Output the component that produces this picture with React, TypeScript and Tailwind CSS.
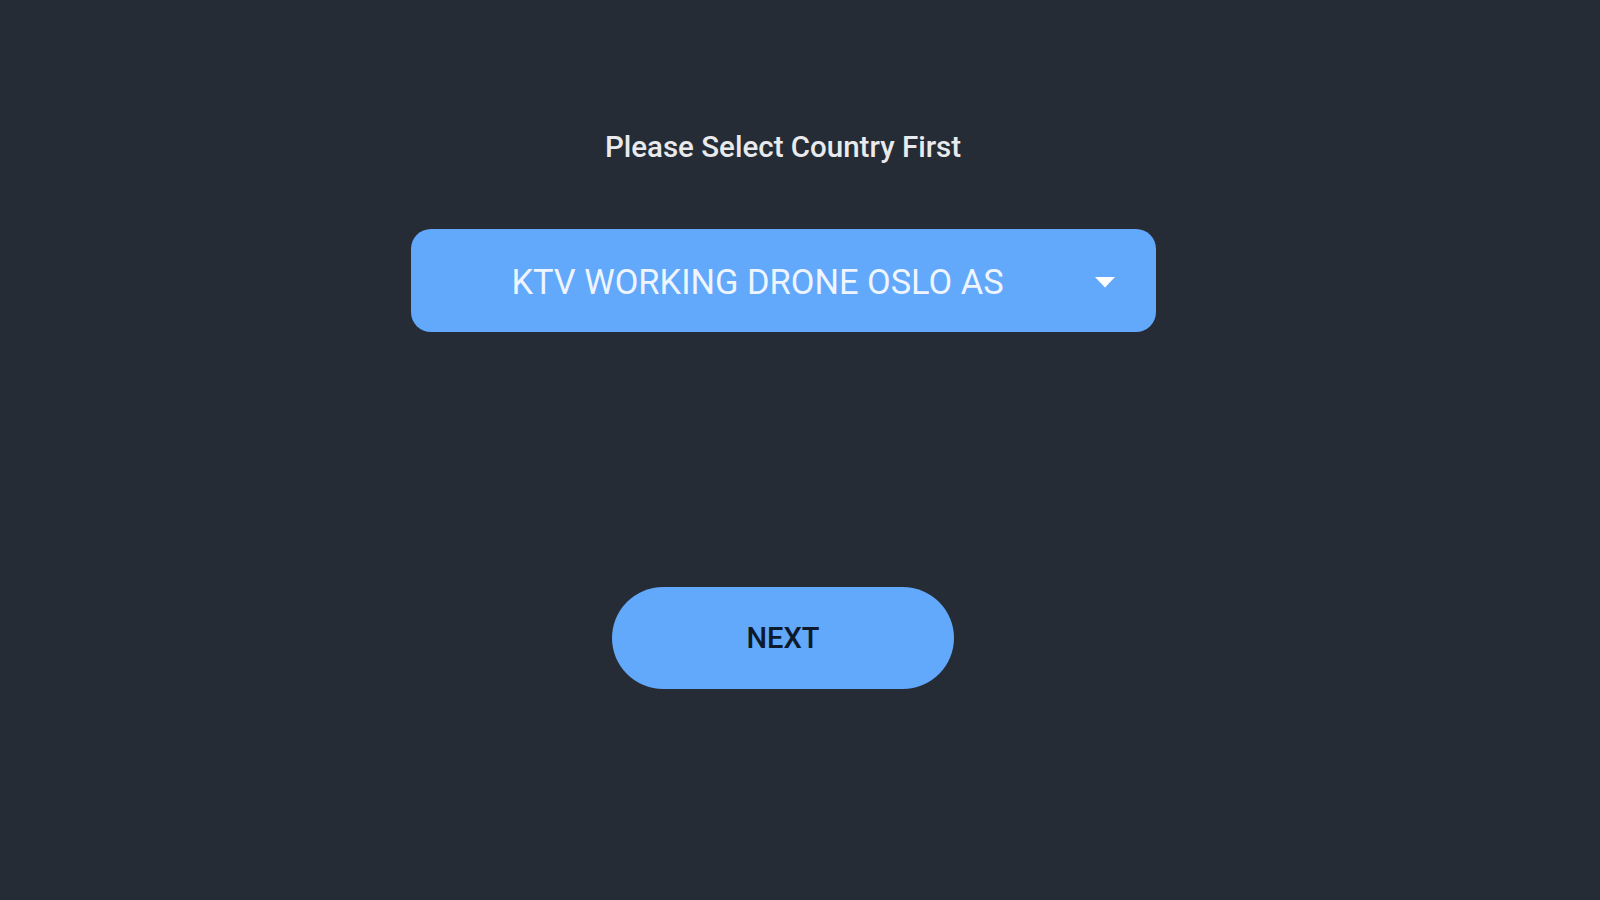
export default function App(): JSX.Element {
  return (
    <main className="flex h-[900px] w-[1600px] flex-col items-center bg-[#262c35] pr-[34px] pt-[131px] font-['Roboto',sans-serif]">
      <h1 className="text-[29.5px] font-medium leading-[32px] text-[#e8eaed]">
        Please Select Country First
      </h1>

      <button
        type="button"
        className="relative mt-[66px] flex h-[103px] w-[745px] items-center justify-center rounded-[20px] bg-[#62a8fb] pr-[51px]"
      >
        <span className="mt-[4px] text-[34.4px] leading-none text-[#eef5ff]">KTV WORKING DRONE OSLO AS</span>
        <svg
          className="absolute right-[41px] top-[48px]"
          width="20"
          height="11"
          viewBox="0 0 20 11"
          aria-hidden="true"
        >
          <path d="M0 0h20L10 10.5z" fill="#ffffff" />
        </svg>
      </button>

      <button
        type="button"
        className="mt-[255px] flex h-[102px] w-[342px] items-center justify-center rounded-full bg-[#62a8fb]"
      >
        <span className="text-[29px] font-medium leading-none text-[#0d1a2b]">NEXT</span>
      </button>
    </main>
  );
}
